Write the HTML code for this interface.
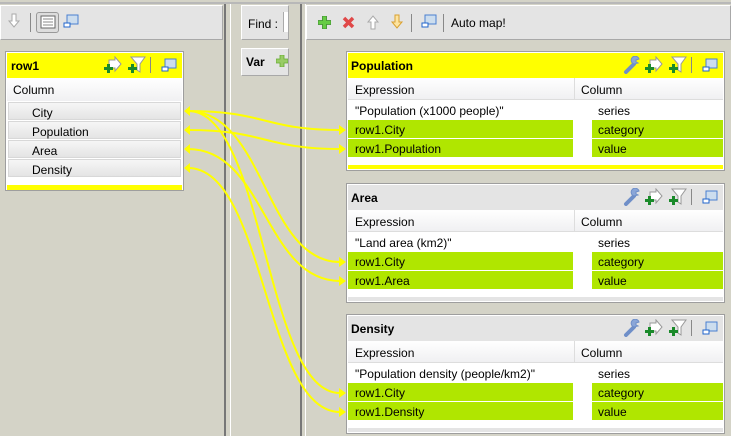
<!DOCTYPE html>
<html><head><meta charset="utf-8"><style>
*{margin:0;padding:0;box-sizing:border-box}
body{width:731px;height:436px;overflow:hidden;background:#d4d3c7;font-family:"Liberation Sans",Tahoma,sans-serif;font-size:12px;color:#000;position:relative}
.a{position:absolute}
.tb{background:#e4e4e4;border:1px solid #fff;border-right-color:#a8a8a8;border-bottom-color:#a8a8a8}
.box{position:absolute;background:#fff;border:1px solid #9e9e9e;width:379px;height:120px}
.hd{position:absolute;left:1px;right:1px;top:1px;height:25px;font-weight:bold;padding:6px 3px}
.eh{position:absolute;left:1px;right:1px;top:26px;height:22px;background:linear-gradient(#fff,#f0f0f2);border-bottom:1px solid #ddd}
.eh span{position:absolute;top:5px}
.r{position:absolute;height:18px}
.r span{position:absolute;top:3px}
.g{background:#b0e600}
.bb{position:absolute;left:1px;right:1px;top:113px;height:4px}
</style></head><body>
<svg width="0" height="0" style="position:absolute">
<defs>
<symbol id="win" viewBox="0 0 16 16"><rect x="4" y="2" width="11" height="9" fill="#cde" stroke="#4a7fd0"/><rect x="1" y="10" width="6" height="4" fill="#fff" stroke="#2266cc"/></symbol>
<symbol id="arr" viewBox="0 0 18 18"><path d="M5 4h6V1l6 7-6 7v-3H5z" fill="#fff" stroke="#999"/><path d="M2 9h3v3h3v3H5v3H2v-3H-1v-3h3z" fill="#1a8a2a" transform="translate(1,-1)"/></symbol>
<symbol id="fun" viewBox="0 0 18 18"><path d="M3 1h14l-5 7v8l-3-2V8z" fill="#fff" stroke="#999"/><path d="M2 9h3v3h3v3H5v3H2v-3H-1v-3h3z" fill="#1a8a2a" transform="translate(1,-1)"/></symbol>
<symbol id="wr" viewBox="0 0 18 18"><path d="M3 16l8-8" stroke="#6f8fc8" stroke-width="4" stroke-linecap="round"/><path d="M11 8a4 4 0 1 1 5-5l-3 1v2l2 1z" fill="#8aa6d8" stroke="#6f8fc8"/></symbol>
</defs></svg>
<div class="a" style="left:0;top:2px;width:731px;height:2px;background:#b8b8b8"></div>
<div class="a" style="left:224px;top:4px;width:2px;height:432px;background:#777"></div>
<div class="a" style="left:230px;top:4px;width:1px;height:432px;background:#fff"></div>
<div class="a" style="left:300px;top:4px;width:2px;height:432px;background:#777"></div>
<div class="a" style="left:305px;top:4px;width:1px;height:432px;background:#fff"></div>
<div class="a tb" style="left:0;top:5px;width:223px;height:35px"></div>
<svg class="a" style="left:7px;top:13px" width="14" height="16"><path d="M5 1h4v7h3l-5 6-5-6h3z" fill="#fff" stroke="#aaa"/></svg>
<div class="a" style="left:30px;top:13px;width:1px;height:19px;background:#888"></div>
<div class="a" style="left:36px;top:12px;width:23px;height:21px;border:1px solid #999;border-radius:3px;background:#ddd"></div>
<svg class="a" style="left:40px;top:15px" width="16" height="14"><rect x="1" y="1" width="14" height="12" fill="#fff" stroke="#666"/><path d="M3 4h10M3 7h10M3 10h10" stroke="#888"/></svg>
<svg class="a" style="left:63px;top:13px" width="16" height="16"><use href="#win"/></svg>
<div class="a tb" style="left:241px;top:5px;width:48px;height:35px"></div>
<div class="a" style="left:248px;top:17px">Find :</div>
<div class="a" style="left:283px;top:12px;width:5px;height:20px;background:#fff;border-left:1px solid #aaa"></div>
<div class="a tb" style="left:241px;top:48px;width:48px;height:28px"></div>
<div class="a" style="left:246px;top:55px;font-weight:bold">Var</div>
<svg class="a" style="left:276px;top:55px" width="12" height="12"><path d="M4 0h4v4h4v4H8v4H4V8H0V4h4z" fill="#9c6" stroke="#6a3" stroke-width=".8"/></svg>
<div class="a tb" style="left:306px;top:5px;width:425px;height:35px"></div>
<svg class="a" style="left:318px;top:16px" width="13" height="13"><path d="M4.5 0h4v4.5H13v4H8.5V13h-4V8.5H0v-4h4.5z" fill="#6c4" stroke="#3a8a2a" stroke-width=".8"/></svg>
<svg class="a" style="left:342px;top:16px" width="13" height="13"><path d="M2 2l9 9M11 2l-9 9" stroke="#e04848" stroke-width="3.5"/></svg>
<svg class="a" style="left:366px;top:14px" width="14" height="16"><path d="M5 15V8H2l5-6 5 6H9v7z" fill="#fff" stroke="#aaa"/></svg>
<svg class="a" style="left:390px;top:14px" width="14" height="16"><path d="M5 1h4v7h3l-5 6-5-6h3z" fill="#fde4a0" stroke="#d9a030"/></svg>
<div class="a" style="left:411px;top:14px;width:1px;height:18px;background:#888"></div>
<svg class="a" style="left:421px;top:13px" width="16" height="16"><use href="#win"/></svg>
<div class="a" style="left:443px;top:14px;width:1px;height:18px;background:#888"></div>
<div class="a" style="left:451px;top:16px">Auto map!</div>

<div class="a" style="left:5px;top:51px;width:179px;height:140px;background:#fff;border:1px solid #9e9e9e">
 <div class="a" style="left:1px;top:1px;width:175px;height:25px;background:#ff0;font-weight:bold;padding:6px 4px">row1</div>
 <svg class="a" style="left:98px;top:4px" width="18" height="18"><use href="#arr"/></svg>
 <svg class="a" style="left:122px;top:4px" width="18" height="18"><use href="#fun"/></svg>
 <div class="a" style="left:144px;top:5px;width:1px;height:16px;background:#888"></div>
 <svg class="a" style="left:155px;top:5px" width="16" height="16"><use href="#win"/></svg>
 <div class="a" style="left:1px;top:26px;width:175px;height:23px;background:linear-gradient(#fff,#f0f0f2);padding:5px 6px">Column</div>
 <div class="a" style="left:2px;top:50px;width:173px;height:18px;border:1px solid #d8d8d8;background:linear-gradient(#f6f6f6,#e4e4e4);padding:3px 23px">City</div>
 <div class="a" style="left:2px;top:69px;width:173px;height:18px;border:1px solid #d8d8d8;background:linear-gradient(#f6f6f6,#e4e4e4);padding:3px 23px">Population</div>
 <div class="a" style="left:2px;top:88px;width:173px;height:18px;border:1px solid #d8d8d8;background:linear-gradient(#f6f6f6,#e4e4e4);padding:3px 23px">Area</div>
 <div class="a" style="left:2px;top:107px;width:173px;height:18px;border:1px solid #d8d8d8;background:linear-gradient(#f6f6f6,#e4e4e4);padding:3px 23px">Density</div>
 <div class="a" style="left:1px;top:133px;width:175px;height:5px;background:#ff0"></div>
</div>

<div class="box" style="left:346px;top:51px">
 <div class="hd" style="background:#ff0">Population</div>
 <svg class="a" style="left:276px;top:4px" width="18" height="18"><use href="#wr"/></svg>
 <svg class="a" style="left:298px;top:4px" width="18" height="18"><use href="#arr"/></svg>
 <svg class="a" style="left:322px;top:4px" width="18" height="18"><use href="#fun"/></svg>
 <div class="a" style="left:344px;top:5px;width:1px;height:16px;background:#888"></div>
 <svg class="a" style="left:355px;top:5px" width="16" height="16"><use href="#win"/></svg>
 <div class="eh"><span style="left:7px">Expression</span><span style="left:233px">Column</span><div class="a" style="left:226px;top:0;width:1px;height:22px;background:#ddd"></div></div>
 <div class="r" style="left:1px;top:49px;width:225px"><span style="left:7px">"Population (x1000 people)"</span></div>
 <div class="r" style="left:245px;top:49px;width:131px"><span style="left:6px">series</span></div>
 <div class="r g" style="left:1px;top:68px;width:225px"><span style="left:7px">row1.City</span></div>
 <div class="r g" style="left:245px;top:68px;width:131px"><span style="left:6px">category</span></div>
 <div class="r g" style="left:1px;top:87px;width:225px"><span style="left:7px">row1.Population</span></div>
 <div class="r g" style="left:245px;top:87px;width:131px"><span style="left:6px">value</span></div>
 <div class="bb" style="background:#ff0"></div>
</div>

<div class="box" style="left:346px;top:183px">
 <div class="hd" style="background:#e4e4e4">Area</div>
 <svg class="a" style="left:276px;top:4px" width="18" height="18"><use href="#wr"/></svg>
 <svg class="a" style="left:298px;top:4px" width="18" height="18"><use href="#arr"/></svg>
 <svg class="a" style="left:322px;top:4px" width="18" height="18"><use href="#fun"/></svg>
 <div class="a" style="left:344px;top:5px;width:1px;height:16px;background:#888"></div>
 <svg class="a" style="left:355px;top:5px" width="16" height="16"><use href="#win"/></svg>
 <div class="eh"><span style="left:7px">Expression</span><span style="left:233px">Column</span><div class="a" style="left:226px;top:0;width:1px;height:22px;background:#ddd"></div></div>
 <div class="r" style="left:1px;top:49px;width:225px"><span style="left:7px">"Land area (km2)"</span></div>
 <div class="r" style="left:245px;top:49px;width:131px"><span style="left:6px">series</span></div>
 <div class="r g" style="left:1px;top:68px;width:225px"><span style="left:7px">row1.City</span></div>
 <div class="r g" style="left:245px;top:68px;width:131px"><span style="left:6px">category</span></div>
 <div class="r g" style="left:1px;top:87px;width:225px"><span style="left:7px">row1.Area</span></div>
 <div class="r g" style="left:245px;top:87px;width:131px"><span style="left:6px">value</span></div>
 <div class="bb" style="background:#e4e4e4"></div>
</div>

<div class="box" style="left:346px;top:314px">
 <div class="hd" style="background:#e4e4e4">Density</div>
 <svg class="a" style="left:276px;top:4px" width="18" height="18"><use href="#wr"/></svg>
 <svg class="a" style="left:298px;top:4px" width="18" height="18"><use href="#arr"/></svg>
 <svg class="a" style="left:322px;top:4px" width="18" height="18"><use href="#fun"/></svg>
 <div class="a" style="left:344px;top:5px;width:1px;height:16px;background:#888"></div>
 <svg class="a" style="left:355px;top:5px" width="16" height="16"><use href="#win"/></svg>
 <div class="eh"><span style="left:7px">Expression</span><span style="left:233px">Column</span><div class="a" style="left:226px;top:0;width:1px;height:22px;background:#ddd"></div></div>
 <div class="r" style="left:1px;top:49px;width:225px"><span style="left:7px">"Population density (people/km2)"</span></div>
 <div class="r" style="left:245px;top:49px;width:131px"><span style="left:6px">series</span></div>
 <div class="r g" style="left:1px;top:68px;width:225px"><span style="left:7px">row1.City</span></div>
 <div class="r g" style="left:245px;top:68px;width:131px"><span style="left:6px">category</span></div>
 <div class="r g" style="left:1px;top:87px;width:225px"><span style="left:7px">row1.Density</span></div>
 <div class="r g" style="left:245px;top:87px;width:131px"><span style="left:6px">value</span></div>
 <div class="bb" style="background:#e4e4e4"></div>
</div>

<svg class="a" style="left:0;top:0" width="731" height="436">
<g stroke="#ffff00" stroke-width="2" fill="none">
<path d="M188 111C265 111 265 130 340 130"/>
<path d="M188 111C265 111 265 262 340 262"/>
<path d="M188 111C265 111 265 393 340 393"/>
<path d="M188 130C265 130 265 149 340 149"/>
<path d="M188 149C265 149 265 281 340 281"/>
<path d="M188 168C265 168 265 412 340 412"/>
</g>
<g fill="#ffff00">
<path d="M184 111l6-5v10z"/><path d="M184 130l6-5v10z"/><path d="M184 149l6-5v10z"/><path d="M184 168l6-5v10z"/>
<path d="M346 130l-7-5v10z"/><path d="M346 149l-7-5v10z"/><path d="M346 262l-7-5v10z"/><path d="M346 281l-7-5v10z"/><path d="M346 393l-7-5v10z"/><path d="M346 412l-7-5v10z"/>
</g>
</svg>
</body></html>
